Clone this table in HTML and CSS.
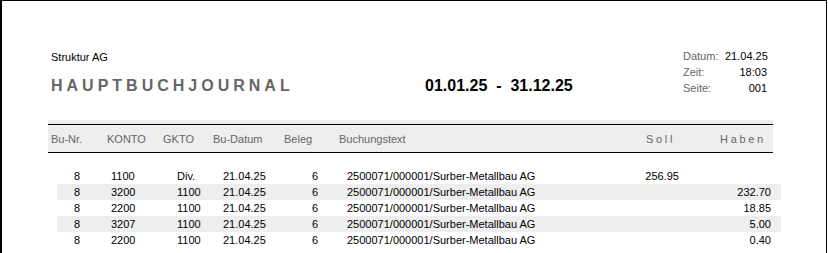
FILE: index.html
```html
<!DOCTYPE html>
<html lang="de">
<head>
<meta charset="utf-8">
<title>Hauptbuchjournal</title>
<link rel="stylesheet" href="styles.css">
</head>
<body>
<div class="page">
  <div class="top">
    <div class="left-col">
      <div class="company">Struktur AG</div>
      <div class="title">HAUPTBUCHJOURNAL</div>
    </div>
    <div class="range">01.01.25&nbsp; - &nbsp;31.12.25</div>
    <div class="meta">
      <span class="meta-label">Datum:</span><span class="meta-value">21.04.25</span>
      <span class="meta-label">Zeit:</span><span class="meta-value">18:03</span>
      <span class="meta-label">Seite:</span><span class="meta-value">001</span>
    </div>
  </div>

  <div class="thead">
    <div class="thead-inner">
      <span>Bu-Nr.</span>
      <span>KONTO</span>
      <span>GKTO</span>
      <span>Bu-Datum</span>
      <span>Beleg</span>
      <span>Buchungstext</span>
      <span class="spaced">Soll</span>
      <span class="spaced">Haben</span>
    </div>
  </div>

  <div class="rows">
    <div class="row">
      <span class="r">8</span><span>1100</span><span>Div.</span><span>21.04.25</span><span class="r">6</span><span class="text">2500071/000001/Surber-Metallbau AG</span><span class="r">256.95</span><span class="r"></span>
    </div>
    <div class="row alt">
      <span class="r">8</span><span>3200</span><span>1100</span><span>21.04.25</span><span class="r">6</span><span class="text">2500071/000001/Surber-Metallbau AG</span><span class="r"></span><span class="r">232.70</span>
    </div>
    <div class="row">
      <span class="r">8</span><span>2200</span><span>1100</span><span>21.04.25</span><span class="r">6</span><span class="text">2500071/000001/Surber-Metallbau AG</span><span class="r"></span><span class="r">18.85</span>
    </div>
    <div class="row alt">
      <span class="r">8</span><span>3207</span><span>1100</span><span>21.04.25</span><span class="r">6</span><span class="text">2500071/000001/Surber-Metallbau AG</span><span class="r"></span><span class="r">5.00</span>
    </div>
    <div class="row">
      <span class="r">8</span><span>2200</span><span>1100</span><span>21.04.25</span><span class="r">6</span><span class="text">2500071/000001/Surber-Metallbau AG</span><span class="r"></span><span class="r">0.40</span>
    </div>
  </div>
</div>
</body>
</html>
```

FILE: styles.css
```css
html, body {
  margin: 0;
  padding: 0;
  background: #fff;
}

body {
  font-family: "Liberation Sans", Arial, sans-serif;
  font-size: 11px;
  line-height: 16px;
  color: #000;
}

.page {
  box-sizing: border-box;
  width: 827px;
  min-height: 270px;
  border-top: 1px solid #000;
  border-left: 2px solid #000;
  border-right: 1px solid #000;
  padding-left: 46px;
}

.top {
  display: flex;
  padding: 47px 0 0 3px;
}

.left-col {
  width: 374px;
  padding-top: 1px;
}

.company {
  line-height: 16px;
}

.title {
  margin-top: 11px;
  font-size: 16px;
  line-height: 20px;
  font-weight: bold;
  letter-spacing: 4px;
  color: #666;
}

.range {
  width: 258px;
  padding-top: 28px;
  font-size: 16px;
  line-height: 20px;
  font-weight: bold;
  white-space: nowrap;
}

.meta {
  display: grid;
  grid-template-columns: 42px 42px;
  align-content: start;
}

.meta-label {
  color: #666;
}

.meta-value {
  text-align: right;
}

.thead {
  width: 725px;
  margin-top: 24px;
  padding-top: 4px;
  background: #eeeeee;
}

.thead-inner {
  display: grid;
  grid-template-columns: 56px 56px 50px 71px 55px 1fr 74px 53px;
  padding: 6px 0 5px 3px;
  border-top: 1px solid #000;
  border-bottom: 1px solid #000;
  color: #666;
}

.spaced {
  letter-spacing: 2.7px;
}

.rows {
  margin-top: 15px;
  margin-left: 9px;
  width: 724px;
}

.row {
  display: grid;
  grid-template-columns: 54px 66px 46px 77px 18px 1fr 100px 92px;
  padding-right: 10px;
  height: 16px;
}

.row.alt {
  background: #eeeeee;
}

.row .r {
  text-align: right;
}

.row span:first-child {
  padding-right: 31px;
}

.row .text {
  padding-left: 29px;
  white-space: nowrap;
}
```
